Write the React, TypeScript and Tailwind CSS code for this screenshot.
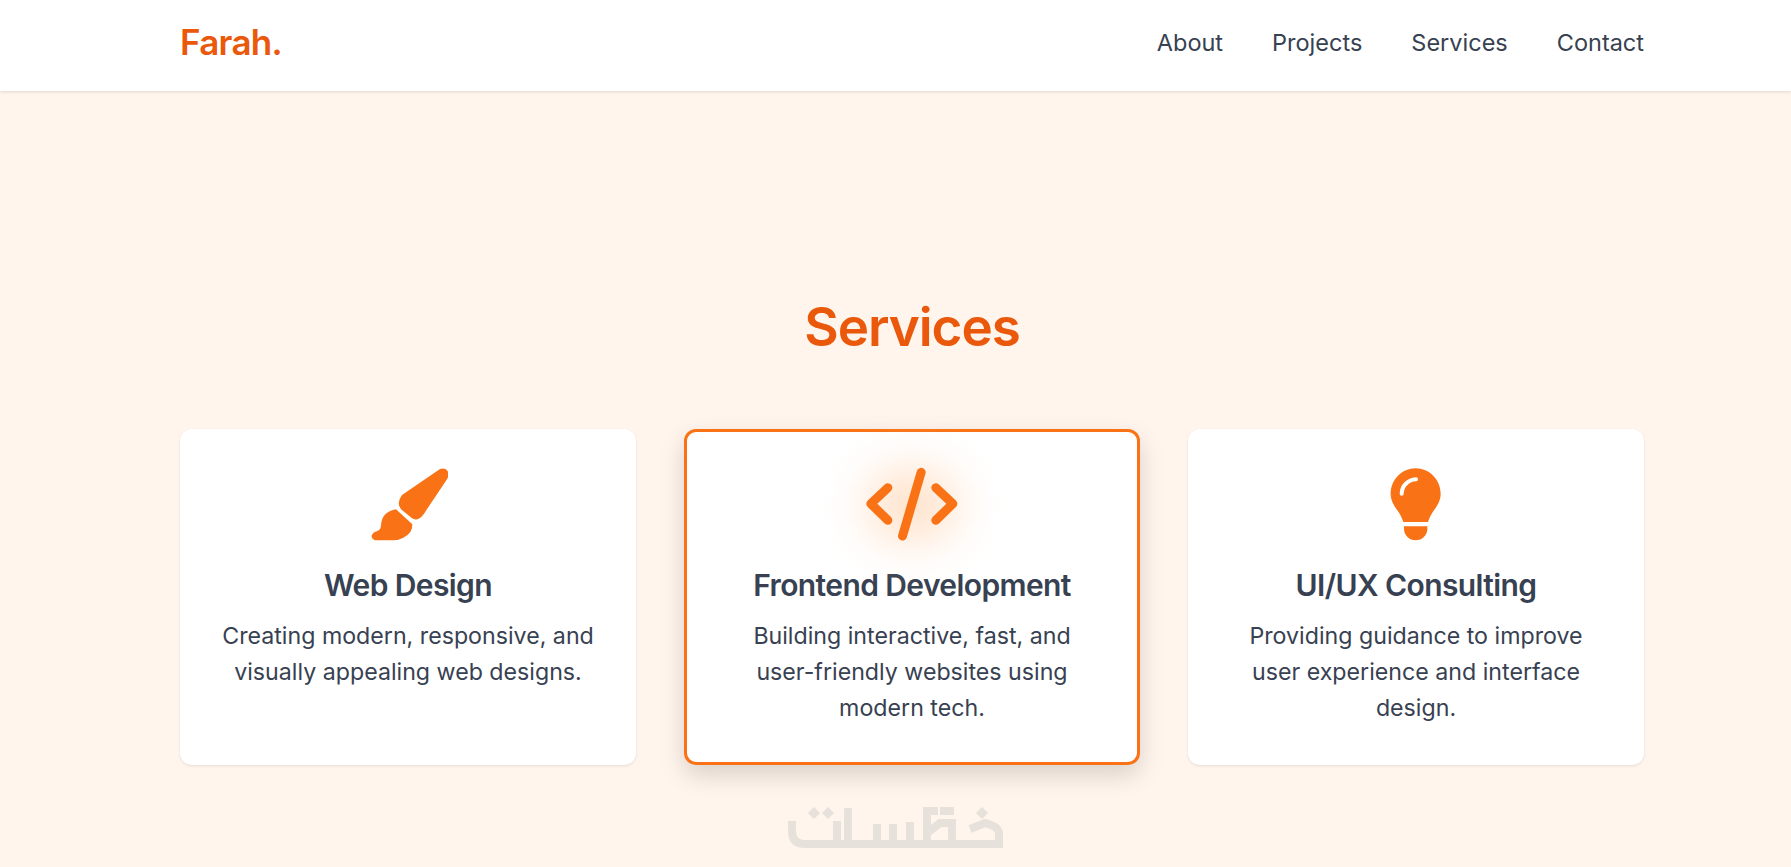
const services = [
  { title: 'Web Design', text: ['Creating modern, responsive, and', 'visually appealing web designs.'], icon: 'brush' },
  { title: 'Frontend Development', text: ['Building interactive, fast, and', 'user-friendly websites using', 'modern tech.'], icon: 'code', active: true },
  { title: 'UI/UX Consulting', text: ['Providing guidance to improve', 'user experience and interface', 'design.'], icon: 'bulb' },
];

function BrushIcon() {
  return (
    <svg width="80" height="75" viewBox="84 50 240 225" fill="#f97316">
      <path d="M300 56 Q316 50 324 64 Q328 78 320 88 L250 193 Q232 215 215 203 L183 177 Q168 158 186 134 Z" />
      <path d="M168 177 L217 222 Q219 248 190 262 Q175 270 160 270 L105 270 Q93 265 95 255 Q100 245 110 243 Q122 240 123 225 Q125 185 168 177 Z" />
    </svg>
  );
}

function CodeIcon() {
  return (
    <svg width="97" height="75" viewBox="72 50 290 225" fill="none" stroke="#f97316" strokeWidth="27" strokeLinecap="round" strokeLinejoin="round">
      <path d="M143 112 L92 160 L143 210" />
      <path d="M287 112 L338 160 L287 210" />
      <path d="M243 66 L187 257" />
    </svg>
  );
}

function BulbIcon() {
  return (
    <svg width="55" height="75" viewBox="117 50 165 225">
      <path fill="#f97316" d="M197 54 C238 54 272 88 272 130 C272 150 262 166 252 180 C244 191 238 203 234 215 L160 215 C156 203 150 191 142 180 C132 166 122 150 122 130 C122 88 156 54 197 54 Z" />
      <path fill="#f97316" d="M162 228 L232 228 L232 236 C232 255 216 270 197 270 C178 270 162 255 162 236 Z" />
      <path fill="none" stroke="#fff" strokeWidth="12" strokeLinecap="round" d="M155 130 C155 107 174 88 198 87" />
    </svg>
  );
}

// khamsat watermark, logo drawing
function Watermark() {
  return (
    <svg className="absolute left-[780px] top-[800px]" width="240" height="60" viewBox="0 0 240 60" fill="none" stroke="#e6e1db" strokeWidth="8">
      <path d="M12 21 V31 Q12 44 25 44 H219 V34 Q219 28 211 25 L205 23 L190 29" />
      <path d="M57 21 V44 M68 8 V44 M97 24 V44 M113 24 V44 M130 22 V44" />
      <path d="M158 11 H147 V44 M147 33 L160 23 H172 V44 M160 11 H174" />
      <path fill="#e6e1db" stroke="none" d="M28 13 l6 -6 l6 6 l-6 6 Z M42 13 l6 -6 l6 6 l-6 6 Z M196 13 l6 -6 l6 6 l-6 6 Z" />
    </svg>
  );
}

export default function App() {
  return (
    <div className="relative h-[867px] overflow-hidden bg-[#fff5ec] font-['Inter',sans-serif] text-[#374151]">
      <nav className="flex h-[91px] items-center justify-between bg-white pb-[6px] pl-[180px] pr-[147px] shadow-[0_1px_3px_rgba(0,0,0,0.12)]">
        <span className="text-[35px] font-semibold leading-none tracking-[-0.02em] text-[#ea580c]">Farah.</span>
        <div className="flex gap-[49px] text-[23.5px] leading-none">
          <a>About</a>
          <a>Projects</a>
          <a>Services</a>
          <a>Contact</a>
        </div>
      </nav>
      <section className="pl-[180px] pr-[147px] pt-[204px]">
        <h2 className="text-center text-[53px] font-semibold leading-[64px] tracking-[-0.02em] text-[#ea580c]">Services</h2>
        <div className="mt-[70px] grid grid-cols-3 gap-[48px]">
          {services.map(s => (
            <div
              key={s.title}
              className={
                s.active
                  ? 'flex h-[336px] flex-col items-center rounded-xl border-[3px] border-[#f97316] bg-white pt-[35px] shadow-[0_10px_25px_rgba(0,0,0,0.15)]'
                  : 'flex h-[336px] flex-col items-center rounded-xl bg-white pt-[38px] shadow-[0_1px_3px_rgba(0,0,0,0.1)]'
              }
            >
              <div className="relative flex h-[75px] items-center justify-center">
                {s.active && <div className="absolute left-1/2 top-1/2 h-[70px] w-[90px] -translate-x-1/2 -translate-y-1/2 rounded-full bg-[#ffe0c7] blur-xl" />}
                <div className="relative flex">
                  {s.icon === 'brush' && <BrushIcon />}
                  {s.icon === 'code' && <CodeIcon />}
                  {s.icon === 'bulb' && <BulbIcon />}
                </div>
              </div>
              <h3 className="mt-[25px] text-[30px] font-semibold leading-[36px] tracking-[-0.02em]">{s.title}</h3>
              <div className="mt-[15px] text-center text-[23.2px] leading-[36px]">
                {s.text.map(t => <p key={t}>{t}</p>)}
              </div>
            </div>
          ))}
        </div>
      </section>
      <Watermark />
    </div>
  );
}
